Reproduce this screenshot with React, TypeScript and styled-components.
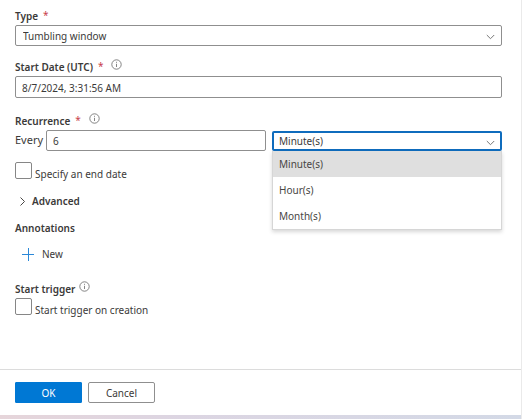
import React, { useState } from "react";
import styled, { createGlobalStyle } from "styled-components";

const GlobalStyle = createGlobalStyle`
  *, *::before, *::after { box-sizing: border-box; }
  body {
    margin: 0;
    background: #fff;
    color: #3b3a39;
    font: 10px/16px "Noto Sans", "Open Sans", sans-serif;
  }
  button, input, select { font: inherit; color: inherit; }
`;

const Panel = styled.div`
  display: flex;
  flex-direction: column;
  min-height: 100vh;
  border-right: 1px solid #eaeaea;
`;

const Form = styled.form`
  flex: 1;
  display: flex;
  flex-direction: column;
  padding: 8px 19px 0 15px;
`;

const Field = styled.div<{ $gap?: number }>`
  display: flex;
  flex-direction: column;
  margin-bottom: ${(p) => p.$gap ?? 14}px;
`;

const LabelRow = styled.div`
  display: flex;
  align-items: flex-start;
  height: 17px;
`;

const Label = styled.label`
  font-weight: 600;
`;

const Heading = styled.h3`
  margin: 0;
  font-size: 10px;
  font-weight: 600;
`;

const Required = styled.span`
  margin-left: 5px;
  line-height: 14px;
  color: #c8414b;
`;

const InfoIcon = styled.svg<{ $gap?: number }>`
  flex: none;
  width: 11px;
  height: 11px;
  margin-left: ${(p) => p.$gap ?? 8}px;
`;

const TextBox = styled.input<{ $tall?: boolean }>`
  display: block;
  min-width: 0;
  width: 100%;
  height: ${(p) => (p.$tall ? 22 : 21)}px;
  padding: 1px 6px 0;
  border: 1px solid #8f8f8f;
  border-radius: 2px;
  background: #fff;
  outline: none;
`;

const SelectWrap = styled.div`
  position: relative;
  min-width: 0;
`;

const Select = styled.select<{ $open?: boolean }>`
  appearance: none;
  display: block;
  width: 100%;
  height: ${(p) => (p.$open ? 20 : 21)}px;
  padding: ${(p) => (p.$open ? "0 5px" : "0 7px")};
  border: ${(p) => (p.$open ? "2px solid #0f6cbd" : "1px solid #8f8f8f")};
  border-radius: 2px;
  background: #fff;
  outline: none;
`;

const Chevron = styled.svg`
  position: absolute;
  right: 7px;
  top: 9px;
  width: 9px;
  height: 6px;
  pointer-events: none;
`;

const Menu = styled.ul`
  position: absolute;
  z-index: 1;
  top: 100%;
  left: 0;
  right: 0;
  margin: 0;
  padding: 0;
  list-style: none;
  background: #fff;
  border: 1px solid #d6d6d6;
  border-top: 0;
  box-shadow: 0 2px 4px rgba(0, 0, 0, 0.16);
`;

const Option = styled.li<{ $active: boolean }>`
  padding: 0 6px;
  line-height: 26px;
  color: #484644;
  background: ${(p) => (p.$active ? "#dfdfdf" : "#fff")};
`;

const RecurrenceRow = styled.div`
  display: grid;
  grid-template-columns: 31px 220fr 6px 230fr;
`;

const Every = styled.label`
  font-size: 11px;
  line-height: 20px;
`;

const UnitCell = styled.div`
  grid-column: 4;
  padding-top: 1px;
`;

const CheckRow = styled.label`
  display: flex;
  align-items: flex-start;
  gap: 3px;
  height: 20px;
`;

const Checkbox = styled.input`
  appearance: none;
  flex: none;
  width: 17px;
  height: 17px;
  margin: 0;
  border: 1px solid #868686;
  border-radius: 2px;
  background: #fff;
`;

const CheckText = styled.span`
  padding-top: 4px;
`;

const TextButton = styled.button<{ $bold?: boolean }>`
  display: flex;
  align-items: center;
  height: 16px;
  margin: 0;
  padding: 0 5px;
  gap: ${(p) => (p.$bold ? 7 : 8)}px;
  border: 0;
  background: none;
  font-weight: ${(p) => (p.$bold ? 600 : 400)};
`;

const Section = styled.section<{ $gap: number }>`
  margin-top: ${(p) => p.$gap}px;
`;

const NewRow = styled.div`
  padding: 10px 0 0 2px;
`;

const Footer = styled.footer`
  display: flex;
  gap: 6px;
  padding: 12px 15px;
  border-top: 1px solid #dcdcdc;
`;

const Button = styled.button<{ $primary?: boolean }>`
  width: 67px;
  height: 21px;
  padding: 1px 0 0;
  border: 1px solid ${(p) => (p.$primary ? "#0078d4" : "#8f8f8f")};
  border-radius: ${(p) => (p.$primary ? 1 : 2)}px;
  background: ${(p) => (p.$primary ? "#0078d4" : "#fff")};
  color: ${(p) => (p.$primary ? "#fff" : "#3b3a39")};
  line-height: 18px;
`;

const Strip = styled.div`
  height: 4px;
  background: linear-gradient(90deg, #e6d5da, #dcd5e2 35%, #d3d9e6);
`;

function Info({ gap }: { gap?: number }) {
  return (
    <InfoIcon $gap={gap} viewBox="0 0 11 11" fill="none" stroke="#666" strokeWidth="0.8" aria-hidden="true">
      <circle cx="5.5" cy="5.5" r="4.7" />
      <path d="M5.5 4.8v3.2M5.5 2.8v1" />
    </InfoIcon>
  );
}

function Down() {
  return (
    <Chevron viewBox="0 0 9 6" fill="none" stroke="#777" aria-hidden="true">
      <path d="M.8 1l3.7 3.7 3.7-3.7" />
    </Chevron>
  );
}

const units = ["Minute(s)", "Hour(s)", "Month(s)"];

export default function App() {
  const [unit, setUnit] = useState(units[0]);
  const [open, setOpen] = useState(true);

  return (
    <>
      <GlobalStyle />
      <Panel>
        <Form id="trigger" onSubmit={(e) => e.preventDefault()}>
          <Field $gap={13}>
            <LabelRow>
              <Label htmlFor="type">Type</Label>
              <Required>*</Required>
            </LabelRow>
            <SelectWrap>
              <Select id="type">
                <option>Tumbling window</option>
              </Select>
              <Down />
            </SelectWrap>
          </Field>

          <Field $gap={15}>
            <LabelRow>
              <Label htmlFor="start">Start Date (UTC)</Label>
              <Required>*</Required>
              <Info />
            </LabelRow>
            <TextBox id="start" $tall defaultValue="8/7/2024, 3:31:56 AM" />
          </Field>

          <Field $gap={11}>
            <LabelRow>
              <Heading>Recurrence</Heading>
              <Required>*</Required>
              <Info />
            </LabelRow>
            <RecurrenceRow>
              <Every htmlFor="interval">Every</Every>
              <TextBox id="interval" defaultValue="6" />
              <UnitCell>
                <SelectWrap>
                  <Select
                    id="unit"
                    aria-label="Recurrence unit"
                    $open={open}
                    value={unit}
                    onChange={(e) => setUnit(e.target.value)}
                  >
                    {units.map((u) => (
                      <option key={u}>{u}</option>
                    ))}
                  </Select>
                  <Down />
                  {open && (
                    <Menu role="listbox" aria-label="Recurrence unit">
                      {units.map((u) => (
                        <Option
                          key={u}
                          role="option"
                          aria-selected={u === unit}
                          $active={u === unit}
                          onClick={() => {
                            setUnit(u);
                            setOpen(false);
                          }}
                        >
                          {u}
                        </Option>
                      ))}
                    </Menu>
                  )}
                </SelectWrap>
              </UnitCell>
            </RecurrenceRow>
          </Field>

          <CheckRow>
            <Checkbox type="checkbox" />
            <CheckText>Specify an end date</CheckText>
          </CheckRow>

          <Section $gap={11}>
            <TextButton type="button" $bold>
              <svg width="5" height="9" viewBox="0 0 5 9" fill="none" stroke="#484644" aria-hidden="true">
                <path d="M.5.5l4 4-4 4" />
              </svg>
              Advanced
            </TextButton>
          </Section>

          <Section $gap={11}>
            <Heading>Annotations</Heading>
            <NewRow>
              <TextButton type="button">
                <svg width="12" height="13" viewBox="0 0 12 13" stroke="#2b88d8" aria-hidden="true">
                  <path d="M0 6.5h12M6.5 0v13" />
                </svg>
                New
              </TextButton>
            </NewRow>
          </Section>

          <Section $gap={19}>
            <LabelRow>
              <Heading>Start trigger</Heading>
              <Info gap={4} />
            </LabelRow>
            <CheckRow>
              <Checkbox type="checkbox" />
              <CheckText>Start trigger on creation</CheckText>
            </CheckRow>
          </Section>
        </Form>
        <Footer>
          <Button $primary type="submit" form="trigger">
            OK
          </Button>
          <Button type="button">Cancel</Button>
        </Footer>
        <Strip />
      </Panel>
    </>
  );
}
